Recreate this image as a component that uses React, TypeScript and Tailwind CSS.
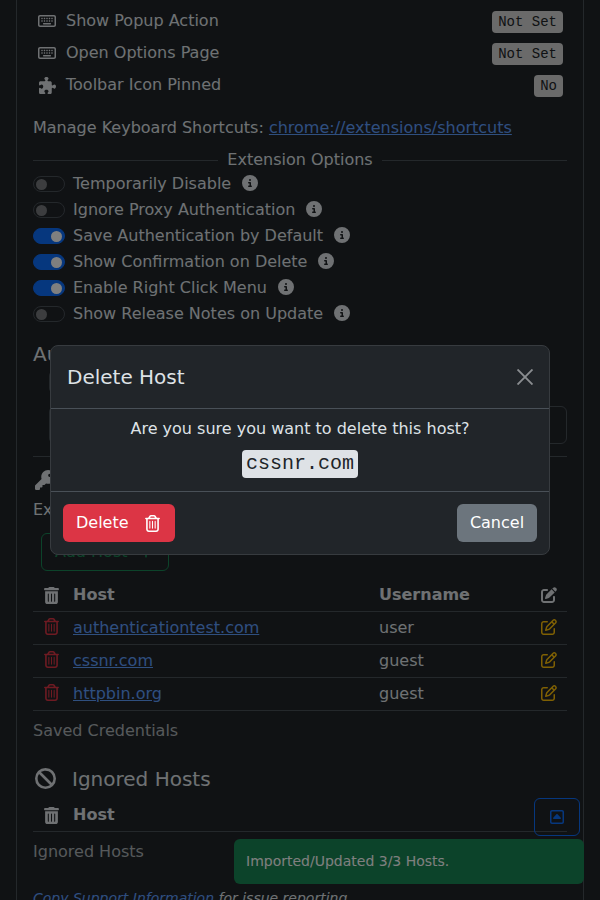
import React from 'react';
import {
  FaBan,
  FaCircleInfo,
  FaKey,
  FaPenToSquare,
  FaPlus,
  FaPuzzlePiece,
  FaRegKeyboard,
  FaRegPenToSquare,
  FaRegSquareCaretUp,
  FaRegTrashCan,
  FaTrashCan,
} from 'react-icons/fa6';

const options = [
  { label: 'Temporarily Disable', on: false },
  { label: 'Ignore Proxy Authentication', on: false },
  { label: 'Save Authentication by Default', on: true },
  { label: 'Show Confirmation on Delete', on: true },
  { label: 'Enable Right Click Menu', on: true },
  { label: 'Show Release Notes on Update', on: false },
];

const hosts = [
  { host: 'authenticationtest.com', user: 'user' },
  { host: 'cssnr.com', user: 'guest' },
  { host: 'httpbin.org', user: 'guest' },
];

const mono = "font-['Liberation_Mono',monospace]";

const ShortcutRow = ({ icon, label, value }: { icon: React.ReactNode; label: string; value: string }) => (
  <div className="flex h-8 items-center">
    <span className="ml-[5px] flex w-[18px] justify-center">{icon}</span>
    <span className="ml-[10px] flex-grow">{label}</span>
    <span className={`${mono} mt-0.5 mr-1 flex h-[22px] items-center rounded bg-[#d4d4d4] px-1.5 text-sm text-[#212529]`}>
      {value}
    </span>
  </div>
);

const Switch = ({ on }: { on: boolean }) => (
  <span
    className={`flex h-4 w-8 items-center rounded-full border px-[2px] ${
      on ? 'justify-end border-[#0d6efd] bg-[#0d6efd]' : 'justify-start border-[#495057] bg-[#212529]'
    }`}
  >
    <span className={`h-[11px] w-[11px] rounded-full ${on ? 'bg-white' : 'bg-[#787b7f]'}`} />
  </span>
);

const App: React.FC = () => {
  return (
    <div className="relative h-[900px] overflow-hidden bg-[#212529] font-['DejaVu_Sans',sans-serif] text-base text-[#dee2e6]">
      <div className="mx-4 h-[960px] border-x border-[#495057] px-4">
        <div className="-mt-[21px] mb-0.5 flex h-6 items-center gap-[9px]">
          <div className="h-px flex-grow bg-[#495057]" />
          <span>Keyboard Shortcuts</span>
          <div className="h-px flex-grow bg-[#495057]" />
        </div>

        <ShortcutRow icon={<FaRegKeyboard size={18} />} label="Show Popup Action" value="Not Set" />
        <ShortcutRow icon={<FaRegKeyboard size={18} />} label="Open Options Page" value="Not Set" />
        <ShortcutRow icon={<FaPuzzlePiece size={17} />} label="Toolbar Icon Pinned" value="No" />

        <p className="mt-[15px] h-6 leading-6">
          Manage Keyboard Shortcuts:{' '}
          <a className="text-[#5f9eff] underline" href="#shortcuts">
            chrome://extensions/shortcuts
          </a>
        </p>

        <div className="mt-2 flex h-6 items-center gap-[9px]">
          <div className="h-px flex-grow bg-[#495057]" />
          <span>Extension Options</span>
          <div className="h-px flex-grow bg-[#495057]" />
        </div>

        <div className="-mt-[1px]">
          {options.map((option) => (
            <div key={option.label} className="flex h-[26px] items-center">
              <Switch on={option.on} />
              <span className="ml-2">{option.label}</span>
              <FaCircleInfo size={16} className="mb-[2px] ml-[11px]" />
            </div>
          ))}
        </div>

        <h5 className="mt-[15px] h-6 text-xl leading-6">Authentication</h5>

        <div className="mt-1 px-4">
          <div className="h-6 w-60 rounded-md border border-[#495057]" />
          <div className="mt-[12px] -mr-4 h-[38px] rounded-md border border-[#495057]" />
        </div>

        <div className="mt-[12px] h-px bg-[#495057]" />

        <div className="mt-[11px] flex h-6 items-center gap-[17px] text-xl">
          <FaKey size={20} className="ml-[2px]" />
          <span>Saved Hosts</span>
        </div>

        <p className="mt-1.5 h-6 leading-6">Export and import hosts</p>

        <button className="mt-[11px] ml-2 flex h-[38px] w-32 items-center gap-[11px] rounded-md border border-[#198754] pl-[13px] text-[#198754]">
          Add Host
          <FaPlus size={14} />
        </button>

        <table className="mt-[7px] w-full table-fixed border-collapse">
          <thead>
            <tr className="h-[33px] border-b border-[#495057] text-left">
              <th className="w-10 p-0 pt-0.5">
                <FaTrashCan size={17} className="ml-[10px]" />
              </th>
              <th className="w-[306px] p-0 pt-0.5 font-bold">Host</th>
              <th className="p-0 pt-0.5 font-bold">Username</th>
              <th className="w-[34px] p-0 pt-0.5">
                <FaPenToSquare size={16} className="ml-2" />
              </th>
            </tr>
          </thead>
          <tbody>
            {hosts.map((item) => (
              <tr key={item.host} className="h-[33px] border-b border-[#495057]">
                <td className="p-0">
                  <FaRegTrashCan size={17} className="mb-[2px] ml-[10px] text-[#dc3545]" />
                </td>
                <td className="p-0">
                  <a className="text-[#5f9eff] underline" href="#host">
                    {item.host}
                  </a>
                </td>
                <td className="p-0">{item.user}</td>
                <td className="p-0">
                  <FaRegPenToSquare size={16} className="mb-[2px] ml-2 text-[#ffc107]" />
                </td>
              </tr>
            ))}
          </tbody>
        </table>

        <p className="mt-2 h-6 leading-6 text-[#dee2e6]/75">Saved Credentials</p>

        <div className="mt-6 flex h-6 items-center gap-4 text-xl">
          <FaBan size={21} className="ml-[2px]" />
          <span>Ignored Hosts</span>
        </div>

        <table className="mt-[7px] w-full table-fixed border-collapse">
          <thead>
            <tr className="h-[34px] border-b border-[#495057] text-left">
              <th className="w-10 p-0 pt-0.5">
                <FaTrashCan size={17} className="ml-[10px]" />
              </th>
              <th className="p-0 pt-0.5 font-bold">Host</th>
            </tr>
          </thead>
        </table>

        <p className="mt-2 h-6 leading-6 text-[#dee2e6]/75">Ignored Hosts</p>

        <p className="mt-6 text-sm italic">
          <a className="text-[#5f9eff] underline" href="#support">
            Copy Support Information
          </a>{' '}
          for issue reporting.
        </p>
      </div>

      <button className="absolute top-[798px] left-[534px] flex h-[38px] w-[46px] items-center justify-center rounded-md border border-[#0d6efd] text-[#0d6efd]">
        <FaRegSquareCaretUp size={16} />
      </button>

      <div className="absolute top-[839px] left-[234px] flex h-[45px] w-[350px] items-center rounded-md bg-[#198754] px-3 pb-0.5 text-sm text-white">
        Imported/Updated 3/3 Hosts.
      </div>

      <div className="absolute inset-0 bg-black/50" />

      <div className="absolute top-[345px] left-[50px] flex h-[210px] w-[500px] flex-col rounded-lg border border-[#373b3f] bg-[#212529]">
        <div className="flex h-[63px] items-center justify-between border-b border-[#495057] px-4">
          <h5 className="text-xl leading-6">Delete Host</h5>
          <svg width="16" height="16" viewBox="0 0 16 16" className="text-[#8a8d90]" fill="none" stroke="currentColor" strokeWidth="1.9">
            <path d="M0.5 0.5 L15.5 15.5 M15.5 0.5 L0.5 15.5" />
          </svg>
        </div>
        <div className="flex h-[83px] flex-col items-center border-b border-[#495057] pt-2">
          <p className="h-6 leading-6">Are you sure you want to delete this host?</p>
          <kbd className={`${mono} mt-[9px] flex h-7 items-center rounded bg-[#dee2e6] px-1 text-xl text-[#212529]`}>
            cssnr.com
          </kbd>
        </div>
        <div className="flex flex-grow items-center justify-between px-3">
          <button className="flex h-[38px] w-28 items-center gap-[15px] rounded-md bg-[#dc3545] pl-[13px] text-white">
            Delete
            <FaRegTrashCan size={17} />
          </button>
          <button className="h-[38px] w-20 rounded-md bg-[#6c757d] text-white">Cancel</button>
        </div>
      </div>
    </div>
  );
};

export default App;
